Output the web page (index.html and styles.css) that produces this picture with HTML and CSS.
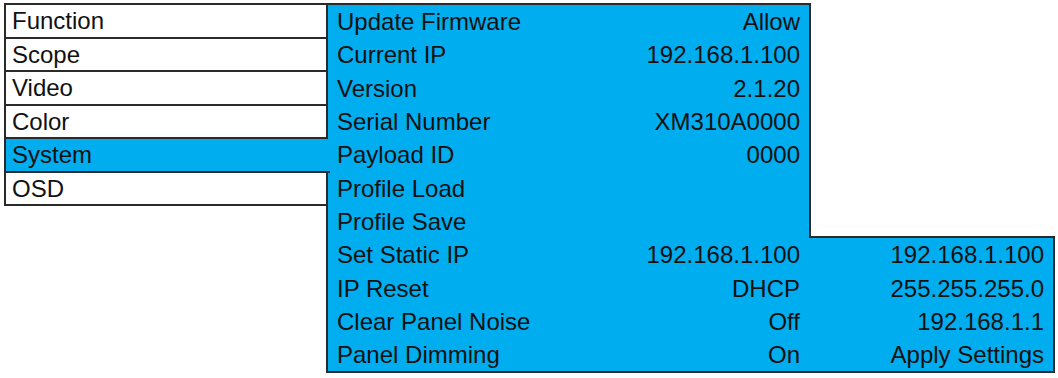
FILE: index.html
```html
<!DOCTYPE html>
<html>
<head>
<meta charset="utf-8">
<title>OSD - System</title>
<link rel="stylesheet" href="styles.css">
</head>
<body>

<div class="osd">

<div class="osd_menu">
<div class="osd_item">Function</div>
<div class="osd_item">Scope</div>
<div class="osd_item">Video</div>
<div class="osd_item">Color</div>
<div class="osd_item sel">System</div>
<div class="osd_item">OSD</div>
</div>

<div class="osd_pnl">
<div class="osd_row"><div>Update Firmware</div><div>Allow</div></div>
<div class="osd_row"><div>Current IP</div><div>192.168.1.100</div></div>
<div class="osd_row"><div>Version</div><div>2.1.20</div></div>
<div class="osd_row"><div>Serial Number</div><div>XM310A0000</div></div>
<div class="osd_row"><div>Payload ID</div><div>0000</div></div>
<div class="osd_row"><div>Profile Load</div><div></div></div>
<div class="osd_row"><div>Profile Save</div><div></div></div>
<div class="osd_row"><div>Set Static IP</div><div>192.168.1.100</div></div>
<div class="osd_row"><div>IP Reset</div><div>DHCP</div></div>
<div class="osd_row"><div>Clear Panel Noise</div><div>Off</div></div>
<div class="osd_row"><div>Panel Dimming</div><div>On</div></div>
</div>

<div class="osd_sub">
<div class="osd_row sel"><div></div><div>192.168.1.100</div></div>
<div class="osd_row"><div></div><div>255.255.255.0</div></div>
<div class="osd_row"><div></div><div>192.168.1.1</div></div>
<div class="osd_row"><div></div><div>Apply Settings</div></div>
</div>

</div>

</body>
</html>
```

FILE: styles.css
```css
* {box-sizing:border-box;}
body {margin:0;padding:3px 0 0 4px;background:#fff;font-family:"Liberation Sans", Arial, sans-serif;font-size:24px;color:#111;}

.osd {display:flex;align-items:flex-start;}

.osd_menu {width:324px;border-top:2px solid #2a2a2a;flex:none;}
.osd_item {height:33.5px;line-height:31.5px;padding-left:6px;border:2px solid #2a2a2a;border-top:none;background:#fff;}
.osd_item.sel {background:#00adee;border-right:none;margin-right:-2px;position:relative;z-index:1;}

.osd_pnl {width:485px;margin-left:-2px;flex:none;background:#00adee;border:2px solid #2a2a2a;padding:0 9px;}
.osd_row {height:33.32px;line-height:33.32px;display:flex;justify-content:space-between;}

.osd_sub {width:246px;margin-left:-2px;align-self:flex-end;flex:none;background:#00adee;border:2px solid #2a2a2a;border-left:none;padding-right:9px;}
.osd_sub .osd_row.sel {margin-left:-2px;background:#00adee;position:relative;z-index:1;}
```
